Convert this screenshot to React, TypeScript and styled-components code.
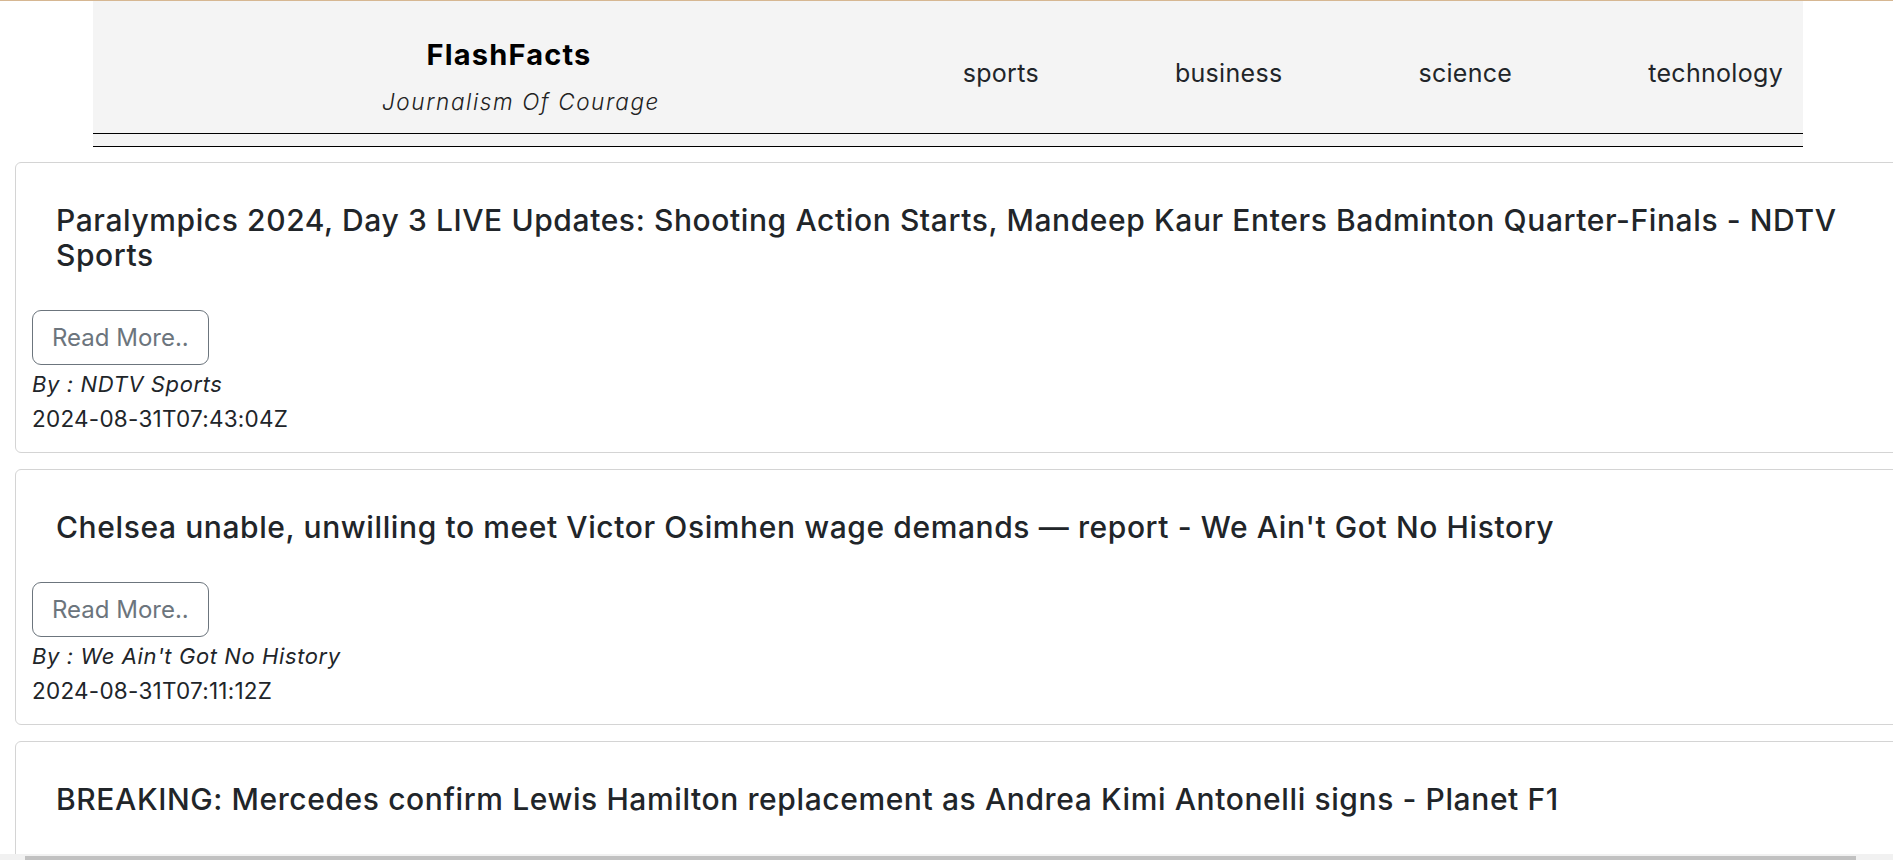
import React from "react";
import styled, { createGlobalStyle } from "styled-components";

const GlobalStyle = createGlobalStyle`
  html, body {
    margin: 0;
    padding: 0;
    overflow: hidden;
    background: #ffffff;
  }
  body {
    font-family: Inter, "Noto Sans", sans-serif;
    color: #212529;
    border-top: 1px solid #d6b792;
  }
  * { box-sizing: border-box; }
`;

const Page = styled.div`
  width: 1893px;
`;

const Header = styled.header`
  margin: 0 90px 0 93px;
  background: #f4f4f4;
  padding-bottom: 12px;
  border-bottom: 1px solid #000;
`;

const NavRow = styled.nav`
  display: flex;
  align-items: flex-start;
  height: 133px;
  border-bottom: 1px solid #000;
`;

const Brand = styled.div`
  display: flex;
  flex-direction: column;
  align-items: center;
  margin-left: 265px;
  padding-top: 36px;
`;

const BrandName = styled.h1`
  margin: 0;
  font-size: 29px;
  font-weight: 700;
  letter-spacing: 1.2px;
  line-height: 35px;
  color: #000;
`;

const Tagline = styled.p`
  margin: 15px 0 0;
  padding-left: 24px;
  font-size: 22.5px;
  font-style: italic;
  font-weight: 300;
  letter-spacing: 1.6px;
  line-height: 30px;
  color: #222;
`;

const NavList = styled.ul`
  display: flex;
  gap: 136px;
  list-style: none;
  margin: 0 0 0 auto;
  padding: 54px 20px 0 0;
`;

const NavLink = styled.a`
  font-size: 25px;
  letter-spacing: 0.3px;
  line-height: 36px;
  color: #212529;
  text-decoration: none;
`;

const Feed = styled.main`
  display: flex;
  flex-direction: column;
  gap: 16px;
  padding: 15px 0 0 15px;
`;

const Card = styled.article`
  width: 1910px;
  border: 1px solid #d4d4d4;
  border-radius: 6px;
  padding: 16px;
  display: flex;
  flex-direction: column;
  align-items: flex-start;
`;

const Title = styled.h2`
  margin: 0 0 37px;
  padding: 24px 24px 0;
  font-size: 30px;
  font-weight: 500;
  letter-spacing: 0.6px;
  line-height: 35px;
  color: #212529;
`;

const ReadMore = styled.a`
  display: inline-block;
  padding: 8.5px 19px;
  font-size: 24px;
  line-height: 36px;
  color: #6c757d;
  border: 1px solid #6c757d;
  border-radius: 9px;
  text-decoration: none;
`;

const Byline = styled.p`
  margin: 3px 0 0;
  font-size: 22px;
  font-style: italic;
  letter-spacing: 0.6px;
  line-height: 32px;
  color: #212529;
`;

const Stamp = styled.p`
  margin: 2px 0 0;
  font-size: 22.5px;
  letter-spacing: 0.25px;
  line-height: 34px;
  color: #212529;
`;

const Scrollbar = styled.div`
  position: fixed;
  left: 0;
  right: 0;
  bottom: 0;
  height: 6px;
  background: #f1f1f1;
  padding: 2px 37px 0 25px;
`;

const Thumb = styled.div`
  height: 100%;
  background: #c1c1c1;
`;

const categories = ["sports", "business", "science", "technology"];

const articles = [
  {
    title:
      "Paralympics 2024, Day 3 LIVE Updates: Shooting Action Starts, Mandeep Kaur Enters Badminton Quarter-Finals - NDTV Sports",
    author: "NDTV Sports",
    date: "2024-08-31T07:43:04Z",
  },
  {
    title:
      "Chelsea unable, unwilling to meet Victor Osimhen wage demands \u2014 report - We Ain't Got No History",
    author: "We Ain't Got No History",
    date: "2024-08-31T07:11:12Z",
  },
  {
    title:
      "BREAKING: Mercedes confirm Lewis Hamilton replacement as Andrea Kimi Antonelli signs - Planet F1",
    author: "Planet F1",
    date: "2024-08-31T06:58:40Z",
  },
];

export default function App() {
  return (
    <Page>
      <GlobalStyle />
      <Header>
        <NavRow>
          <Brand>
            <BrandName>FlashFacts</BrandName>
            <Tagline>Journalism Of Courage</Tagline>
          </Brand>
          <NavList>
            {categories.map((c) => (
              <li key={c}>
                <NavLink href="#">{c}</NavLink>
              </li>
            ))}
          </NavList>
        </NavRow>
      </Header>
      <Feed>
        {articles.map((a) => (
          <Card key={a.title}>
            <Title>{a.title}</Title>
            <ReadMore href="#">Read More..</ReadMore>
            <Byline>By : {a.author}</Byline>
            <Stamp>{a.date}</Stamp>
          </Card>
        ))}
      </Feed>
      <Scrollbar>
        <Thumb />
      </Scrollbar>
    </Page>
  );
}
